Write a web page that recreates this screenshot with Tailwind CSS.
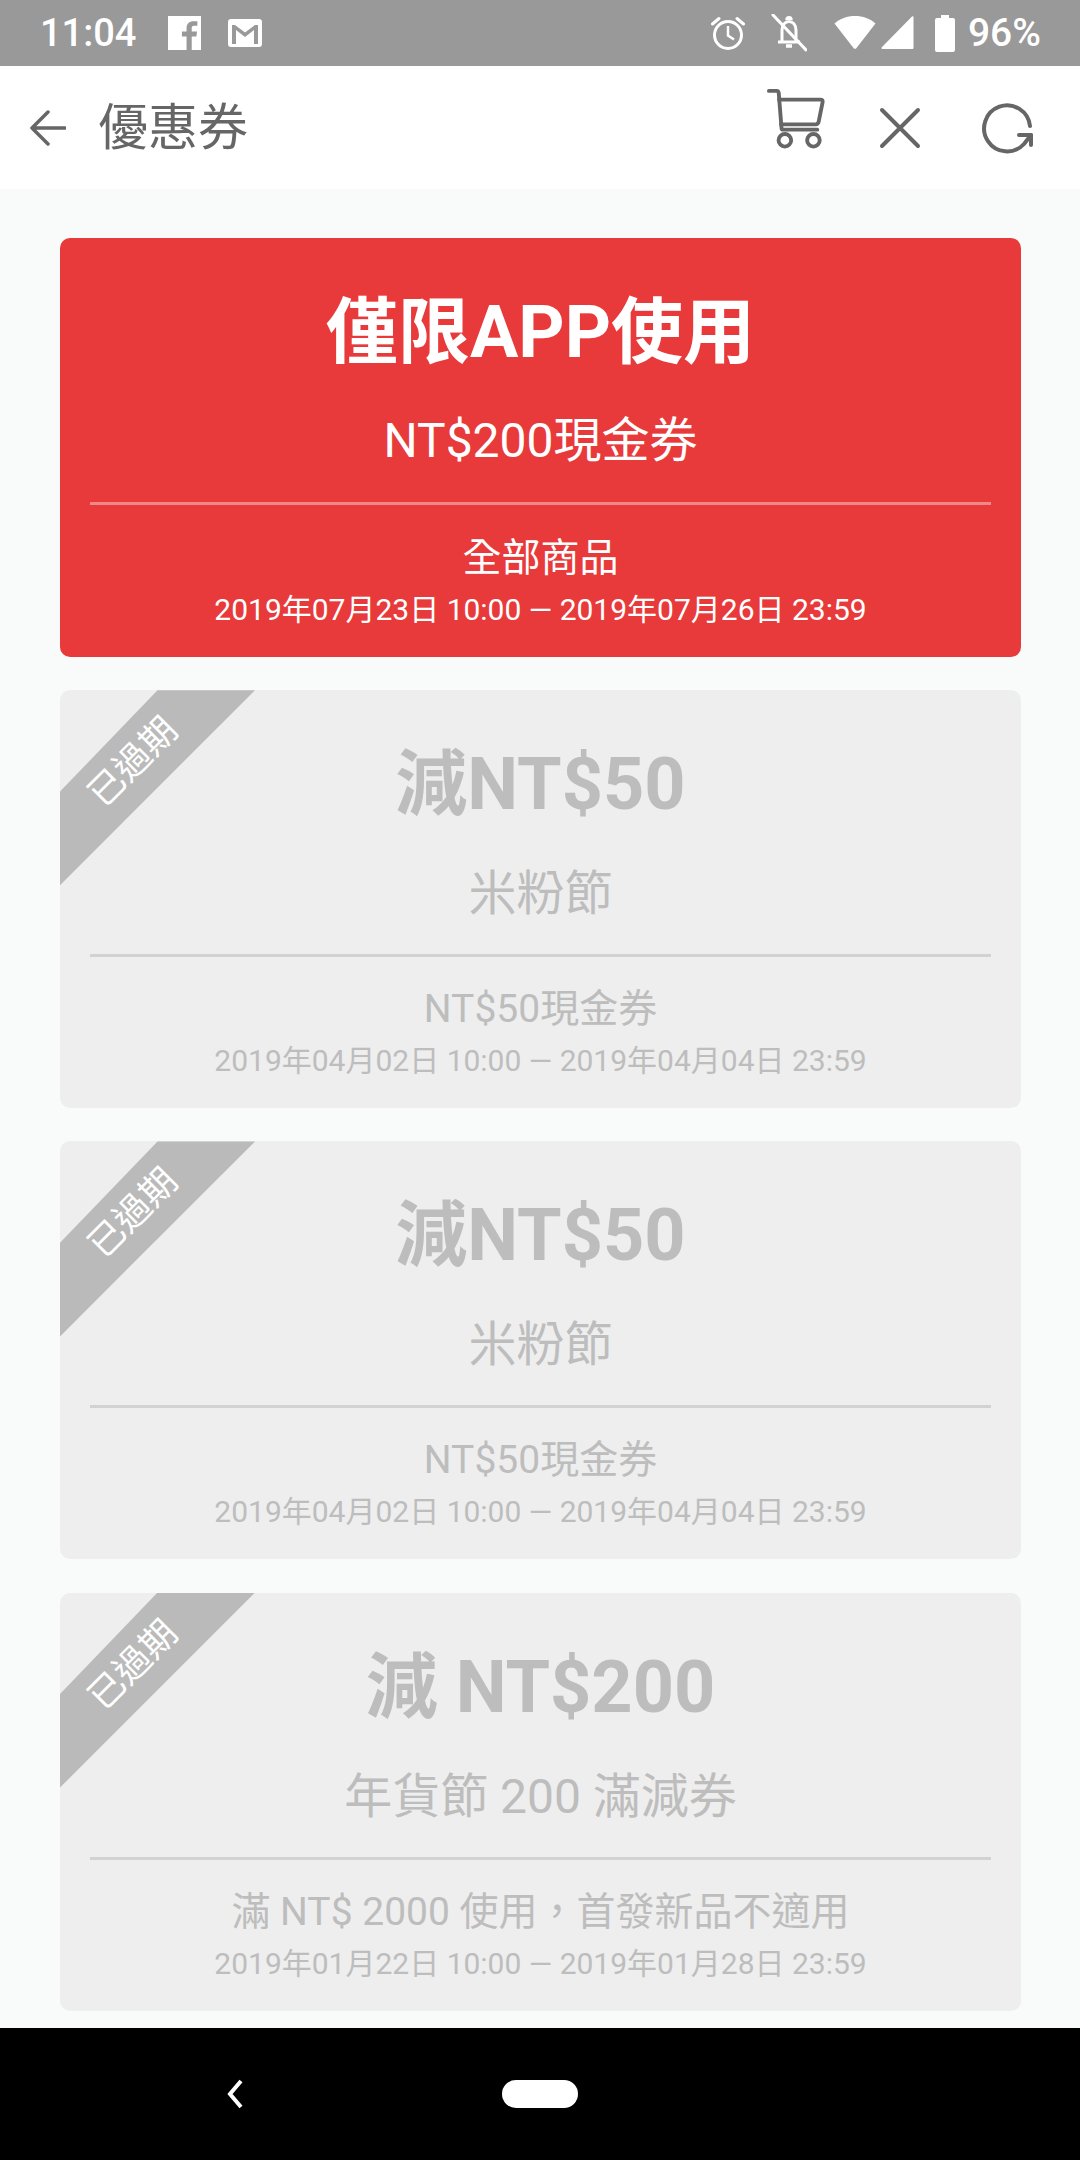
<!DOCTYPE html>
<html lang="zh-Hant">
<head>
  <meta charset="UTF-8" />
  <meta name="viewport" content="width=device-width, initial-scale=1.0"/>
  <title>優惠券</title>
  <script src="https://cdn.jsdelivr.net/npm/@tailwindcss/browser@4"></script>
</head>
<body class="bg-[#f9fbfa] font-['Roboto','Noto_Sans_CJK_TC',sans-serif]">
  <div class="w-[1080px] h-[2160px] flex flex-col overflow-hidden">
    <!-- status bar -->
    <div class="h-[66px] shrink-0 bg-[#999999] flex items-center text-white pl-[40px] pr-[39px]">
      <span class="text-[38px] font-medium leading-none">11:04</span>
      <svg class="ml-[32px]" width="33" height="34" viewBox="0 0 32 33"><path fill="#fff" d="M0 0h32v33H23V20h4.500l.7-5H23v-3c0-1.500.4-2.500 2.500-2.500H28.500V5.200C28 5.100 26.400 5 24.600 5 20.800 5 18 7.300 18 11.600V15h-4.500v5H18v13H0z"/></svg>
      <svg class="ml-[27px]" width="34" height="28" viewBox="0 0 34 28"><path fill="#fff" fill-rule="evenodd" d="M3 0h28a3 3 0 0 1 3 3v22a3 3 0 0 1-3 3H3a3 3 0 0 1-3-3V3a3 3 0 0 1 3-3zM4 6v19h4V11l9 7 9-7v14h4V6h-3l-10 7.500L7 6z"/></svg>
      <div class="flex-1"></div>
      <svg width="34" height="36" viewBox="0 0 34 36" fill="none" stroke="#fff" stroke-width="3"><circle cx="17" cy="20" r="13.500"/><path d="M17 11v9.500l6 4" stroke-width="2.500"/><path d="M1.500 9 8 3.500M32.500 9 26 3.500" stroke-linecap="round"/></svg>
      <svg class="ml-[26px]" width="36" height="38" viewBox="0 0 36 38" fill="none" stroke="#fff" stroke-width="3"><path d="M7 28h22M11 27V16c0-5 3-8.500 7-8.500s7 3.500 7 8.500v11"/><path d="M15 32h6M16 6c0-3 4-3 4 0" stroke-width="3.500"/><path d="M2 1l33 35" stroke-linecap="round"/></svg>
      <svg class="ml-[27px]" width="42" height="34" viewBox="0 0 42 34"><path fill="#fff" d="M21 0c8 0 15 2.500 20.500 7.500L22.500 32a2 2 0 0 1-3 0L.5 7.500C6 2.500 13 0 21 0z"/></svg>
      <svg class="ml-[5px]" width="33" height="34" viewBox="0 0 33 34"><path fill="#fff" d="M32.500 1v31a1 1 0 0 1-1 1H1.500a1 1 0 0 1-.7-1.700L31 .5a.9.900 0 0 1 1.500.5z"/></svg>
      <svg class="ml-[21px]" width="20" height="37" viewBox="0 0 20 37"><path fill="#fff" d="M6 0h8v3h4a2 2 0 0 1 2 2v30a2 2 0 0 1-2 2H2a2 2 0 0 1-2-2V5a2 2 0 0 1 2-2h4z"/></svg>
      <span class="ml-[13px] text-[39px] font-medium leading-none">96%</span>
    </div>
    <!-- app bar -->
    <div class="h-[123px] shrink-0 bg-white flex items-center text-[#666666]">
      <svg class="ml-[30px]" width="36" height="38" viewBox="0 0 36 38" fill="none" stroke="#666666" stroke-width="3.500" stroke-linecap="round" stroke-linejoin="round"><path d="M35 19H3M18 3 2 19l16 16"/></svg>
      <span class="ml-[32px] text-[50px] leading-none">優惠券</span>
      <div class="flex-1"></div>
      <svg class="-mt-[17px]" width="60" height="60" viewBox="0 0 60 62" fill="none" stroke="#666666" stroke-width="4" stroke-linecap="round" stroke-linejoin="round"><path d="M2 2h8c1.500 0 2 1 2.200 2.500L15 40a2 2 0 0 0 2 2h35"/><path d="M12.500 11h43c1.500 0 2.300 1 2 2.500l-4 20c-.3 1.500-1.300 3-3 3H14.500"/><circle cx="18.500" cy="53" r="6.500"/><circle cx="48" cy="53" r="6.500"/></svg>
      <svg class="ml-[53px]" width="42" height="42" viewBox="0 0 42 42" fill="none" stroke="#666666" stroke-width="4" stroke-linecap="round"><path d="M3 3l36 36M39 3 3 39"/></svg>
      <svg class="ml-[61px] mr-[46px]" width="52" height="52" viewBox="0 0 52 52" fill="none" stroke="#666666" stroke-width="4" stroke-linejoin="round" stroke-linecap="round"><path d="M48 24A23 23 0 1 0 42 42L49 33"/><path d="M37 33h12v10" /></svg>
    </div>
    <!-- coupons -->
    <div id="list" class="flex-1 flex flex-col gap-[33.200px] pl-[60px] pr-[59px] pt-[49px]">
      <div class="relative h-[419px] shrink-0 rounded-[10px] bg-[#e83a3a] text-white flex flex-col items-center overflow-hidden">
        <div class="text-[72px] font-bold leading-none mt-[59px]">僅限APP使用</div>
        <div class="text-[48px] leading-none mt-[48px]">NT$200現金券</div>
        <div class="w-[901px] h-[3px] bg-white/40 mt-[37px]"></div>
        <div class="text-[39px] leading-none mt-[34px]">全部商品</div>
        <div class="text-[30px] leading-none mt-[17px]">2019年07月23日 10:00 — 2019年07月26日 23:59</div>
      </div>
      <div class="relative h-[418px] shrink-0 rounded-[10px] bg-[#eeeeee] text-[#bdbdbd] flex flex-col items-center overflow-hidden">
        <div class="absolute left-0 top-0 w-[195px] h-[195px] bg-[#bababa] [clip-path:polygon(0_100%,100%_0,50%_0,0_52%)]"></div>
        <div class="absolute left-[13px] top-[54px] w-[120px] text-center text-[36px] leading-none text-white -rotate-45">已過期</div>
        <div class="text-[72px] font-bold leading-none mt-[59px]">減NT$50</div>
        <div class="text-[48px] leading-none mt-[49px]">米粉節</div>
        <div class="w-[901px] h-[3px] bg-[#d2d2d2] mt-[36px]"></div>
        <div class="text-[39px] leading-none mt-[33px]">NT$50現金券</div>
        <div class="text-[30px] leading-none mt-[17px]">2019年04月02日 10:00 — 2019年04月04日 23:59</div>
      </div>
      <div class="relative h-[418px] shrink-0 rounded-[10px] bg-[#eeeeee] text-[#bdbdbd] flex flex-col items-center overflow-hidden">
        <div class="absolute left-0 top-0 w-[195px] h-[195px] bg-[#bababa] [clip-path:polygon(0_100%,100%_0,50%_0,0_52%)]"></div>
        <div class="absolute left-[13px] top-[54px] w-[120px] text-center text-[36px] leading-none text-white -rotate-45">已過期</div>
        <div class="text-[72px] font-bold leading-none mt-[59px]">減NT$50</div>
        <div class="text-[48px] leading-none mt-[49px]">米粉節</div>
        <div class="w-[901px] h-[3px] bg-[#d2d2d2] mt-[36px]"></div>
        <div class="text-[39px] leading-none mt-[33px]">NT$50現金券</div>
        <div class="text-[30px] leading-none mt-[17px]">2019年04月02日 10:00 — 2019年04月04日 23:59</div>
      </div>
      <div class="relative h-[418px] shrink-0 rounded-[10px] bg-[#eeeeee] text-[#bdbdbd] flex flex-col items-center overflow-hidden">
        <div class="absolute left-0 top-0 w-[195px] h-[195px] bg-[#bababa] [clip-path:polygon(0_100%,100%_0,50%_0,0_52%)]"></div>
        <div class="absolute left-[13px] top-[54px] w-[120px] text-center text-[36px] leading-none text-white -rotate-45">已過期</div>
        <div class="text-[72px] font-bold leading-none mt-[59px]">減 NT$200</div>
        <div class="text-[48px] leading-none mt-[49px]">年貨節 200 滿減券</div>
        <div class="w-[901px] h-[3px] bg-[#d2d2d2] mt-[36px]"></div>
        <div class="text-[39px] leading-none mt-[33px]">滿 NT$ 2000 使用，首發新品不適用</div>
        <div class="text-[30px] leading-none mt-[17px]">2019年01月22日 10:00 — 2019年01月28日 23:59</div>
      </div>
    </div>
    <!-- nav bar -->
    <div class="h-[132px] shrink-0 bg-black relative flex items-center justify-center">
      <svg class="absolute left-[222px] top-[51px]" width="22" height="30" viewBox="0 0 22 30" fill="none" stroke="#fff" stroke-width="4"><path d="M19 2 8 15l11 13"/></svg>
      <div class="w-[76px] h-[28px] rounded-full bg-white"></div>
    </div>
  </div>
</body>
</html>
